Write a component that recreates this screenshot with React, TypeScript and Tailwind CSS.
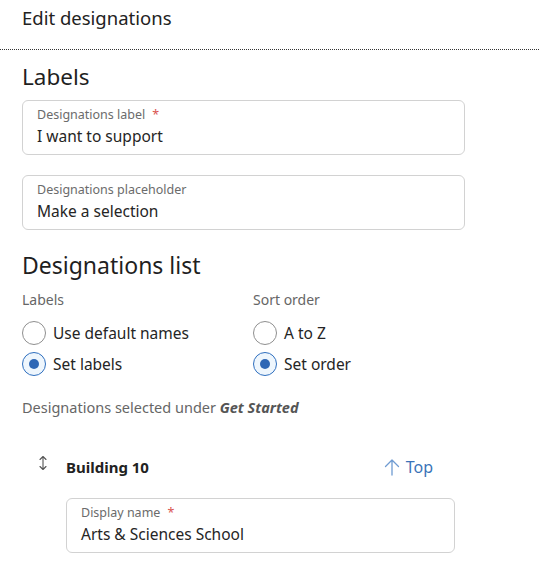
export default function App() {
  const font = { fontFamily: '"Noto Sans", "Open Sans", sans-serif' };
  return (
    <div className="w-[539px] h-[568px] overflow-hidden bg-white text-[#252525]" style={font}>
      {/* Header */}
      <div className="h-[50px] border-b border-dotted border-[#333] px-[22px] pt-[4px]">
        <h1 className="text-[18.5px] leading-[28px] text-[#222]">Edit designations</h1>
      </div>

      <div className="pl-[22px] pr-[74px]">
        {/* Labels */}
        <h2 className="mt-[12px] text-[22.5px] leading-[30px] text-[#1f1f1f]">Labels</h2>
        <div className="mt-[8px] flex flex-col gap-[20px]">
          <Field label="Designations label" required value="I want to support" />
          <Field label="Designations placeholder" value="Make a selection" />
        </div>

        {/* Designations list */}
        <h2 className="mt-[19px] text-[23px] leading-[32px] text-[#1f1f1f]">Designations list</h2>
        <div className="mt-[9px] flex">
          <div className="w-[231px]">
            <p className="text-[14px] leading-[20px] text-[#666]">Labels</p>
            <div className="mt-[11px] flex flex-col gap-[7px]">
              <Radio label="Use default names" />
              <Radio label="Set labels" checked />
            </div>
          </div>
          <div>
            <p className="text-[14px] leading-[20px] text-[#666]">Sort order</p>
            <div className="mt-[11px] flex flex-col gap-[7px]">
              <Radio label="A to Z" />
              <Radio label="Set order" checked />
            </div>
          </div>
        </div>

        <p className="mt-[21px] text-[14.5px] leading-[20px] text-[#666]">
          Designations selected under <span className="font-bold italic text-[#555]">Get Started</span>
        </p>

        {/* Building row */}
        <div className="mt-[38px] flex items-center pl-[16px] pr-[32px]">
          <svg width="10" height="16" viewBox="0 0 10 16" className="mt-[-8px]" fill="none" stroke="#555" strokeWidth="1.1" strokeLinecap="round" strokeLinejoin="round">
            <path d="M5 1.5v13M2 4.5l3-3 3 3M2 11.5l3 3 3-3" />
          </svg>
          <span className="ml-[18px] text-[15px] font-bold text-[#222]">Building 10</span>
          <button className="ml-auto flex items-center gap-[6px] text-[16px] text-[#3a73b8]">
            <svg width="16" height="18" viewBox="0 0 16 18" fill="none" stroke="#6f9bd1" strokeWidth="1.3" strokeLinecap="round" strokeLinejoin="round">
              <path d="M8 17V2M1.5 8.5L8 2l6.5 6.5" />
            </svg>
            Top
          </button>
        </div>
        <div className="mt-[19px] pl-[44px] pr-[10px]">
          <Field label="Display name" required value="Arts & Sciences School" />
        </div>
      </div>
    </div>
  );
}

function Field({ label, value, required }: { label: string; value: string; required?: boolean }) {
  return (
    <div className="h-[55px] rounded-[6px] border border-[#d2d2d2] px-[14px] pt-[6px]">
      <div className="text-[12.5px] leading-[16px] text-[#6b6b6b]">
        {label}
        {required && <span className="ml-[7px] text-[#d9534f]">*</span>}
      </div>
      <div className="mt-[2px] text-[15.5px] leading-[22px] text-[#252525]">{value}</div>
    </div>
  );
}

function Radio({ label, checked }: { label: string; checked?: boolean }) {
  return (
    <label className="flex items-center gap-[7px]">
      <span
        className={
          checked
            ? "flex h-[24px] w-[24px] items-center justify-center rounded-full border border-[#2f6fbf] bg-[#eef6fd]"
            : "flex h-[24px] w-[24px] items-center justify-center rounded-full border border-[#8f8f8f] bg-white"
        }
      >
        {checked && <span className="h-[10px] w-[10px] rounded-full bg-[#2e67b5]" />}
      </span>
      <span className="text-[15.5px] leading-[22px] text-[#252525]">{label}</span>
    </label>
  );
}
